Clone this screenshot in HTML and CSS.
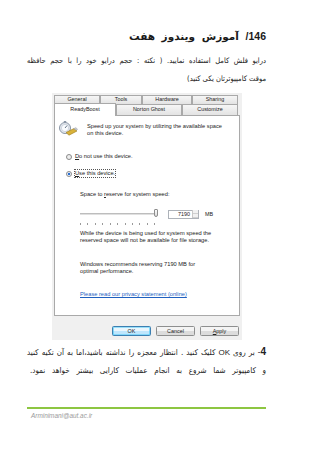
FILE: index.html
```html
<!DOCTYPE html>
<html>
<head>
<meta charset="utf-8">
<link rel="stylesheet" href="styles.css">
</head>
<body>
<div class="page">
  <h1 class="title" dir="rtl"><span class="num">146/</span> آموزش ویندوز هفت</h1>
  <p class="para" dir="rtl">
    <span class="ln jl">درایو فلش کامل استفاده نمایید. ( نکته : حجم درایو خود را با حجم حافظه</span>
    <span class="ln">موقت کامپیوترتان یکی کنید)</span>
  </p>

  <div class="dlg">
    <div class="tabrow row1">
      <div class="tab w-gen">General</div>
      <div class="tab w-tools">Tools</div>
      <div class="tab w-hw">Hardware</div>
      <div class="tab w-sh">Sharing</div>
    </div>
    <div class="tabrow row2">
      <div class="tab sel w-rb">ReadyBoost</div>
      <div class="tab w-ng">Norton Ghost</div>
      <div class="tab w-cu">Customize</div>
    </div>
    <div class="panel">
      <div class="intro">
        <svg class="rbicon" width="20" height="15" viewBox="0 0 20 15">
          <circle cx="7" cy="7" r="5.5" fill="#e4e8ee" stroke="#8a96a6" stroke-width="1"/>
          <circle cx="7" cy="7" r="3.6" fill="#fafcff" stroke="#b9c3d0" stroke-width="0.6"/>
          <rect x="5.8" y="0" width="2.4" height="1.6" fill="#8a96a6"/>
          <line x1="7" y1="7" x2="9" y2="4.6" stroke="#44556a" stroke-width="0.8"/>
          <path d="M8 11.5 L16 7.5 L19 10 L11 14.2 Z" fill="#d9b23a" stroke="#9c7a17" stroke-width="0.6"/>
          <path d="M15.5 7.8 L17.8 6.6 L19.6 8.3 L18.6 9.2 Z" fill="#c9ccd2" stroke="#8a8f98" stroke-width="0.4"/>
        </svg>
        <div class="introtext">Speed up your system by utilizing the available space<br>on this device.</div>
      </div>
      <div class="radio r1"><span class="rb"></span><span><u>D</u>o not use this device.</span></div>
      <div class="radio r2"><span class="rb on"></span><span class="focus"><u>U</u>se this device.</span></div>
      <div class="ind space">Space to <u>r</u>eserve for system speed:</div>
      <div class="ind slider">
        <div class="track"><span class="thumb"></span></div>
        <div class="spin"><span class="val">7190</span><span class="arrows"><i class="up"></i><i class="dn"></i></span></div>
        <span class="mb">MB</span>
      </div>
      <div class="ind ticks">
        <i></i><i></i><i></i><i></i><i></i><i></i><i></i><i></i><i></i><i></i><i></i>
      </div>
      <div class="ind note">While the device is being used for system speed the<br>reserved space will not be available for file storage.</div>
      <div class="ind rec">Windows recommends reserving 7190 MB for<br>optimal performance.</div>
      <div class="ind link">Please read our privacy statement (online)</div>
    </div>
    <div class="buttons">
      <div class="btn def">OK</div>
      <div class="btn">Cancel</div>
      <div class="btn"><u>A</u>pply</div>
    </div>
  </div>

  <p class="para p2" dir="rtl">
    <span class="ln jl"><span class="num4">4</span>- بر روی <span class="lat">OK</span> کلیک کنید . انتظار معجزه را نداشته باشید،اما به آن تکیه کنید</span>
    <span class="ln wide">و کامپیوتر شما شروع به انجام عملیات کارایی بیشتر خواهد نمود.</span>
  </p>

  <div class="rule"></div>
  <div class="mail">Arminimani@aut.ac.ir</div>
</div>
</body>
</html>
```

FILE: styles.css
```css
html, body {
  margin: 0;
  padding: 0;
  background: #ffffff;
}
.page {
  width: 239px;
  margin-left: 27px;
  padding-top: 30px;
  font-family: "DejaVu Sans Condensed", "DejaVu Sans", "Liberation Sans", sans-serif;
  color: #1a1a1a;
}
.title {
  margin: 0;
  font-family: "DejaVu Sans", sans-serif;
  font-size: 10.5px;
  line-height: 12px;
  font-weight: bold;
  text-align: right;
  word-spacing: 3px;
}
.title .num {
  font-family: "Liberation Sans", sans-serif;
  font-size: 10.5px;
  word-spacing: 0;
}
.para {
  margin: 10px 0 0 0;
  font-size: 7.5px;
  line-height: 18px;
  text-align: right;
  color: #222;
}
.ln {
  display: block;
  white-space: nowrap;
}
.ln.jl {
  text-align: justify;
  text-align-last: justify;
  white-space: normal;
}
.num4 {
  font-family: "Liberation Sans", sans-serif;
  font-size: 10px;
  font-weight: bold;
}
.lat {
  font-family: "Liberation Sans", sans-serif;
  font-size: 8px;
}

/* dialog */
.dlg {
  width: 190px;
  margin: 5px 0 0 25px;
  background: #f0f0f0;
  padding: 2px 2px 4px 2px;
  box-sizing: border-box;
  font-family: "Liberation Sans", sans-serif;
  font-size: 5.7px;
  color: #222;
}
.tabrow {
  display: flex;
  height: 9px;
}
.row2 {
  height: 11px;
  align-items: flex-end;
}
.tab {
  box-sizing: border-box;
  height: 9px;
  border: 1px solid #a9a9a9;
  border-bottom: none;
  background: linear-gradient(#f6f6f6, #e3e3e3);
  display: flex;
  align-items: center;
  justify-content: center;
  line-height: 1;
  font-size: 5.4px;
}
.row2 .tab {
  height: 11px;
}
.row2 .tab.sel {
  height: 13px;
  margin-top: -2px;
  background: #ffffff;
  position: relative;
  z-index: 1;
  margin-bottom: -1px;
}
.w-gen { width: 46px; }
.w-tools { width: 42px; }
.w-hw { width: 50px; }
.w-sh { width: 46px; }
.w-rb { width: 62px; }
.w-ng { width: 66px; }
.w-cu { width: 56px; }

.panel {
  background: #ffffff;
  border: 1px solid #a9a9a9;
  height: 201px;
  box-sizing: border-box;
  padding: 5px 0 0 3px;
  line-height: 7px;
}
.intro {
  display: flex;
  align-items: flex-start;
}
.rbicon {
  display: block;
  flex: none;
}
.introtext {
  margin: 2px 0 0 9px;
}
.radio {
  display: flex;
  align-items: center;
  margin-left: 8px;
  height: 7px;
}
.r1 { margin-top: 16px; }
.r2 { margin-top: 10px; }
.rb {
  width: 4px;
  height: 4px;
  border-radius: 50%;
  border: 0.7px solid #8b8b8b;
  background: #eeeeee;
  margin-right: 3px;
  flex: none;
}
.rb.on {
  background: radial-gradient(circle, #2a6fd0 0 45%, #e8eef8 55%);
}
.focus {
  outline: 0.6px dotted #555;
}
.ind {
  margin-left: 22px;
}
.space {
  margin-top: 14px;
}
.slider {
  display: flex;
  align-items: center;
  height: 10px;
  margin-top: 11px;
}
.track {
  width: 78px;
  height: 1px;
  background: #bdbdbd;
  border-bottom: 1px solid #e0e0e0;
  position: relative;
}
.thumb {
  position: absolute;
  left: 74px;
  top: -4px;
  width: 4px;
  height: 8px;
  box-sizing: border-box;
  border: 0.7px solid #8d8d8d;
  border-radius: 1px 1px 2px 2px;
  background: linear-gradient(#fbfbfb, #dcdcdc);
}
.spin {
  margin-left: 10px;
  width: 31px;
  height: 9px;
  box-sizing: border-box;
  border: 0.7px solid #adb2b9;
  display: flex;
  align-items: center;
  justify-content: flex-end;
  background: #fff;
  font-size: 5.4px;
}
.val {
  margin-right: 2px;
}
.arrows {
  width: 5px;
  height: 8px;
  display: flex;
  flex-direction: column;
  border-left: 0.6px solid #c8c8c8;
  background: #f1f1f1;
}
.arrows i {
  flex: 1;
  display: block;
  border-bottom: 0.5px solid #d0d0d0;
}
.mb {
  margin-left: 6px;
  font-size: 5.4px;
}
.ticks {
  display: flex;
  justify-content: space-between;
  width: 75px;
  height: 2px;
  margin-top: 4px;
}
.ticks i {
  width: 0.7px;
  height: 2px;
  background: #9a9a9a;
}
.note {
  margin-top: 5px;
}
.rec {
  margin-top: 17px;
  line-height: 6.5px;
}
.link {
  margin-top: 17px;
  color: #1e5fbf;
  text-decoration: underline;
}
.buttons {
  display: flex;
  justify-content: flex-end;
  gap: 5px;
  padding: 10px 1px 0 0;
}
.btn {
  width: 39px;
  height: 10px;
  box-sizing: border-box;
  border: 0.8px solid #8e8f8f;
  border-radius: 1.5px;
  background: linear-gradient(#f4f4f4 0 50%, #dcdcdc 50% 100%);
  display: flex;
  align-items: center;
  justify-content: center;
  font-size: 5.4px;
}
.btn.def {
  border-color: #3c7fb1;
  background: linear-gradient(#eaf6fd 0 50%, #bee6fd 50% 100%);
  box-shadow: inset 0 0 0 0.6px #48c8f5;
}

.p2 {
  margin-top: 3px;
  font-size: 8px;
}
.wide {
  word-spacing: 4.4px;
}
.rule {
  height: 2px;
  background: #8dc641;
  margin-top: 27px;
}
.mail {
  margin: 3px 0 0 4px;
  font-family: "Liberation Sans", sans-serif;
  font-style: italic;
  font-size: 6.4px;
  line-height: 8px;
  color: #9a9a9a;
  direction: ltr;
}
```
